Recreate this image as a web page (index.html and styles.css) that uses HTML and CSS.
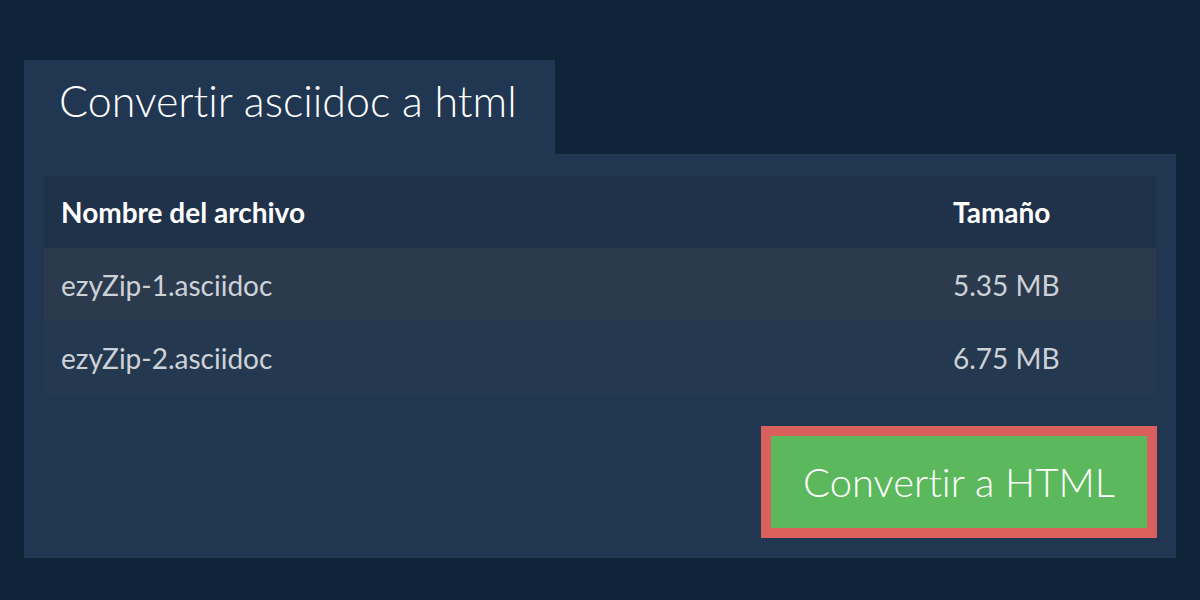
FILE: index.html
```html
<!DOCTYPE html>
<html lang="es">
<head>
<meta charset="utf-8">
<link rel="stylesheet" href="styles.css">
</head>
<body>
<div class="page">
  <div class="tab">Convertir asciidoc a html</div>
  <div class="panel">
    <table class="files">
      <thead>
        <tr><th class="name">Nombre del archivo</th><th class="size">Tamaño</th></tr>
      </thead>
      <tbody>
        <tr class="odd"><td>ezyZip-1.asciidoc</td><td>5.35 MB</td></tr>
        <tr class="even"><td>ezyZip-2.asciidoc</td><td>6.75 MB</td></tr>
      </tbody>
    </table>
    <div class="actions">
      <button class="convert">Convertir a HTML</button>
    </div>
  </div>
</div>
</body>
</html>
```
FILE: styles.css
```css
html, body {
  margin: 0;
  padding: 0;
  background: #0f2339;
  font-family: Lato, "Open Sans", sans-serif;
  font-variant-ligatures: none;
}
.page {
  padding: 60px 24px 0;
  width: 1152px;
}
.tab {
  width: 496px;
  height: 94px;
  padding-left: 35px;
  background: #213650;
  color: #ffffff;
  font-weight: 300;
  font-size: 43px;
  line-height: 82px;
  white-space: nowrap;
}
.panel {
  background: #213650;
  padding: 22px 20px 20px;
}
.files {
  width: 1112px;
  border-collapse: collapse;
  font-size: 28px;
}
.files th, .files td {
  text-align: left;
  padding: 0 0 0 17px;
  height: 73px;
}
.files th {
  height: 72px;
  background: #1f3249;
  color: #ffffff;
  font-weight: 700;
}
.files th.size {
  width: 203px;
}
.files td {
  color: #cdd2d8;
}
.files tr.odd td {
  background: #2b3b4d;
}
.files tr.even td {
  background: #243850;
}
.actions {
  display: flex;
  justify-content: flex-end;
  margin-top: 32px;
}
.convert {
  width: 396px;
  height: 112px;
  background: #5cb85c;
  border: 10px solid #d9605d;
  color: #ffffff;
  font-family: Lato, "Open Sans", sans-serif;
  font-variant-ligatures: none;
  font-weight: 300;
  font-size: 40px;
  padding: 0;
  margin-right: -1px;
}
```
